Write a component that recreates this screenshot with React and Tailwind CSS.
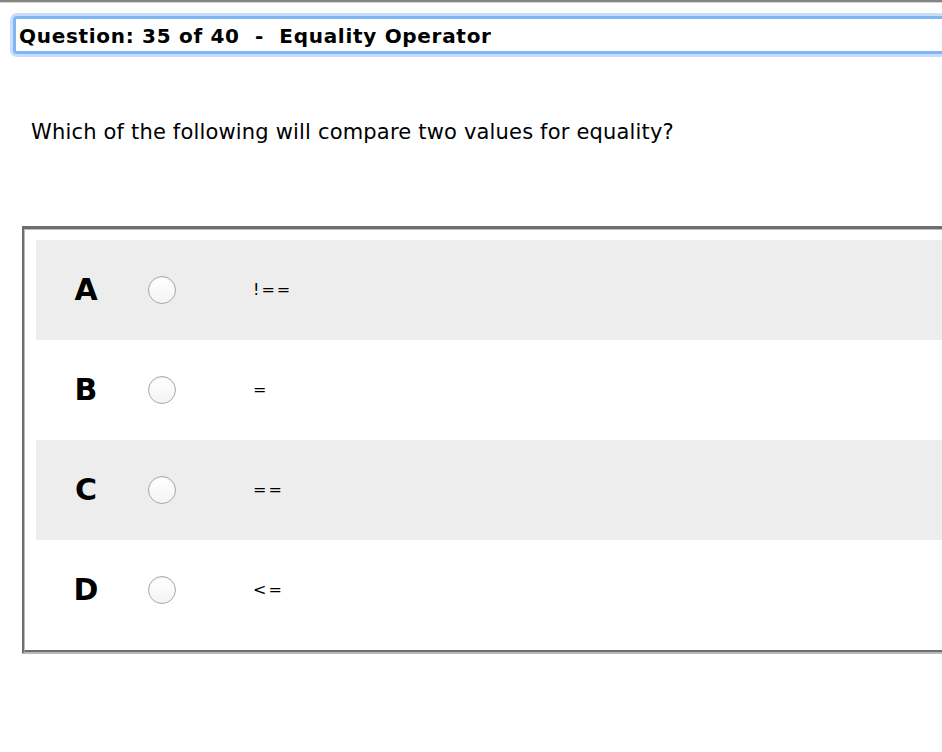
import { useState } from "react";

const options = [
    { letter: "A", text: "!==" },
    { letter: "B", text: "=" },
    { letter: "C", text: "==" },
    { letter: "D", text: "<=" },
];

export default function App() {
    const [picked, setPicked] = useState(null);

    return (
        <div className="w-[942px] h-[752px] overflow-hidden bg-white font-['DejaVu_Sans',Verdana,sans-serif] text-black">
            {/* top rule */}
            <div className="h-[2px] bg-[#858585]"></div>
            <div className="h-px bg-[#d2d2d2]"></div>

            {/* question header */}
            <div className="mt-[13px] ml-[13px] w-[960px] h-[38px] rounded-[4px] border-[3px] border-[#7fb7f6] shadow-[0_0_0_3px_#c8ddf9] bg-white flex items-center pl-[3px] pt-[2px]">
                <span className="text-[20px] font-bold leading-none whitespace-pre tracking-[0.7px]">Question: 35 of 40  -  Equality Operator</span>
            </div>

            <p className="mt-[63px] ml-[31px] h-[30px] text-[21px] leading-[30px] tracking-[0.18px]">Which of the following will compare two values for equality?</p>

            {/* answers */}
            <div className="mt-[79px] ml-[22px] w-[940px] border-t-[3px] border-l-[2px] border-b-[2px] border-t-[#6e6e6e] border-l-[#6e6e6e] border-b-[#b9b9b9]">
                <div className="border-t border-l border-b-[2px] border-t-[#bcbcbc] border-l-[#bcbcbc] border-b-[#6e6e6e] pt-[10px] pb-[10px] pl-[11px]">
                    {options.map((o, i) => (
                        <label
                            key={o.letter}
                            className={`flex items-center h-[100px] cursor-pointer ${i % 2 === 0 ? "bg-[#ededed]" : "bg-white"}`}
                        >
                            <span className="w-[100px] text-center text-[30px] font-black leading-none">{o.letter}</span>
                            <span className="ml-[12px] w-[28px] h-[28px] rounded-full border border-[#a9a9a9] bg-gradient-to-b from-white to-[#f4f4f4] shadow-[inset_0_1px_1px_rgba(0,0,0,0.08)] flex items-center justify-center">
                                {picked === o.letter && <span className="w-[12px] h-[12px] rounded-full bg-[#3a8ff0]"></span>}
                            </span>
                            <input
                                type="radio"
                                name="answer"
                                className="hidden"
                                checked={picked === o.letter}
                                onChange={() => setPicked(o.letter)}
                            />
                            <span className="ml-[77px] text-[16px] tracking-[2px]">{o.text}</span>
                        </label>
                    ))}
                </div>
            </div>
        </div>
    );
}
